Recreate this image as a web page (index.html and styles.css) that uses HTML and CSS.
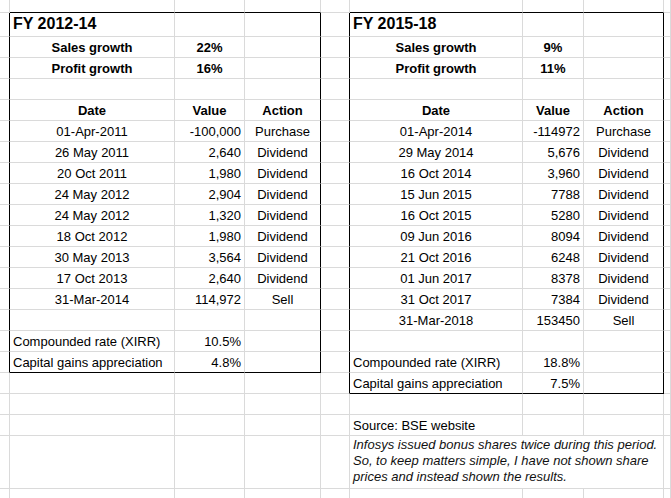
FILE: index.html
```html
<!DOCTYPE html>
<html>
<head>
<meta charset="utf-8">
<title>Infosys returns</title>
<link rel="stylesheet" href="styles.css">
</head>
<body>
<div class="sheet">
  <!-- r0 -->
  <div></div><div class="bb"></div><div class="bb"></div><div class="bb"></div><div></div><div class="bb"></div><div class="bb"></div><div class="bb"></div><div></div>
  <!-- r1 -->
  <div class="br"></div><div class="t">FY 2012-14</div><div></div><div class="br"></div><div class="br"></div><div class="t">FY 2015-18</div><div></div><div class="br"></div><div></div>
  <!-- r2 -->
  <div class="br"></div><div class="b c">Sales growth</div><div class="b c">22%</div><div class="br"></div><div class="br"></div><div class="b c">Sales growth</div><div class="b c">9%</div><div class="br"></div><div></div>
  <!-- r3 -->
  <div class="br"></div><div class="b c">Profit growth</div><div class="b c">16%</div><div class="br"></div><div class="br"></div><div class="b c">Profit growth</div><div class="b c">11%</div><div class="br"></div><div></div>
  <!-- r4 -->
  <div class="br"></div><div></div><div></div><div class="br"></div><div class="br"></div><div></div><div></div><div class="br"></div><div></div>
  <!-- r5 -->
  <div class="br"></div><div class="b c">Date</div><div class="b c">Value</div><div class="b c br">Action</div><div class="br"></div><div class="b c">Date</div><div class="b c">Value</div><div class="b c br">Action</div><div></div>
  <!-- r6 -->
  <div class="br"></div><div class="c">01-Apr-2011</div><div class="r">-100,000</div><div class="c br">Purchase</div><div class="br"></div><div class="c">01-Apr-2014</div><div class="r">-114972</div><div class="c br">Purchase</div><div></div>
  <!-- r7 -->
  <div class="br"></div><div class="c">26 May 2011</div><div class="r">2,640</div><div class="c br">Dividend</div><div class="br"></div><div class="c">29 May 2014</div><div class="r">5,676</div><div class="c br">Dividend</div><div></div>
  <!-- r8 -->
  <div class="br"></div><div class="c">20 Oct 2011</div><div class="r">1,980</div><div class="c br">Dividend</div><div class="br"></div><div class="c">16 Oct 2014</div><div class="r">3,960</div><div class="c br">Dividend</div><div></div>
  <!-- r9 -->
  <div class="br"></div><div class="c">24 May 2012</div><div class="r">2,904</div><div class="c br">Dividend</div><div class="br"></div><div class="c">15 Jun 2015</div><div class="r">7788</div><div class="c br">Dividend</div><div></div>
  <!-- r10 -->
  <div class="br"></div><div class="c">24 May 2012</div><div class="r">1,320</div><div class="c br">Dividend</div><div class="br"></div><div class="c">16 Oct 2015</div><div class="r">5280</div><div class="c br">Dividend</div><div></div>
  <!-- r11 -->
  <div class="br"></div><div class="c">18 Oct 2012</div><div class="r">1,980</div><div class="c br">Dividend</div><div class="br"></div><div class="c">09 Jun 2016</div><div class="r">8094</div><div class="c br">Dividend</div><div></div>
  <!-- r12 -->
  <div class="br"></div><div class="c">30 May 2013</div><div class="r">3,564</div><div class="c br">Dividend</div><div class="br"></div><div class="c">21 Oct 2016</div><div class="r">6248</div><div class="c br">Dividend</div><div></div>
  <!-- r13 -->
  <div class="br"></div><div class="c">17 Oct 2013</div><div class="r">2,640</div><div class="c br">Dividend</div><div class="br"></div><div class="c">01 Jun 2017</div><div class="r">8378</div><div class="c br">Dividend</div><div></div>
  <!-- r14 -->
  <div class="br"></div><div class="c">31-Mar-2014</div><div class="r">114,972</div><div class="c br">Sell</div><div class="br"></div><div class="c">31 Oct 2017</div><div class="r">7384</div><div class="c br">Dividend</div><div></div>
  <!-- r15 -->
  <div class="br"></div><div></div><div></div><div class="br"></div><div class="br"></div><div class="c">31-Mar-2018</div><div class="r">153450</div><div class="c br">Sell</div><div></div>
  <!-- r16 -->
  <div class="br"></div><div>Compounded rate (XIRR)</div><div class="r">10.5%</div><div class="br"></div><div class="br"></div><div></div><div></div><div class="br"></div><div></div>
  <!-- r17 -->
  <div class="br"></div><div class="bb">Capital gains appreciation</div><div class="r bb">4.8%</div><div class="br bb"></div><div class="br"></div><div>Compounded rate (XIRR)</div><div class="r">18.8%</div><div class="br"></div><div></div>
  <!-- r18 -->
  <div></div><div></div><div></div><div></div><div class="br"></div><div class="bb">Capital gains appreciation</div><div class="r bb">7.5%</div><div class="br bb"></div><div></div>
  <!-- r19 -->
  <div></div><div></div><div></div><div></div><div></div><div></div><div></div><div></div><div></div>
  <!-- r20 -->
  <div></div><div></div><div></div><div></div><div></div><div>Source: BSE website</div><div></div><div></div><div></div>
  <!-- r21 -->
  <div></div><div></div><div></div><div></div><div></div><div class="note">Infosys issued bonus shares twice during this period. So, to keep matters simple, I have not shown share prices and instead shown the results.</div><div></div>
  <!-- r22 -->
  <div></div><div></div><div></div><div></div><div></div><div></div><div></div><div></div><div></div>
</div>
</body>
</html>
```

FILE: styles.css
```css
html, body {
  margin: 0;
  padding: 0;
  background: #ffffff;
}

body {
  font-family: "Liberation Sans", Arial, sans-serif;
  font-size: 13px;
  color: #000000;
}

.sheet {
  display: grid;
  grid-template-columns: 10px 165px 70px 76px 29px 173px 61px 80px 1fr;
  grid-template-rows: 13px 24px repeat(19, 21px) 53px 20px;
  width: 671px;
  height: 498px;
  overflow: hidden;
}

.sheet > div {
  box-sizing: border-box;
  border-right: 1px solid #dadada;
  border-bottom: 1px solid #dadada;
  display: flex;
  align-items: flex-end;
  padding: 0 3px 2px 3px;
  line-height: 15px;
  white-space: nowrap;
  min-width: 0;
}

.sheet > .bb {
  border-bottom-color: #000000;
}

.sheet > .br {
  border-right-color: #000000;
}

.sheet > .t {
  font-size: 16px;
  font-weight: bold;
  line-height: 18px;
  padding-bottom: 3px;
}

.b {
  font-weight: bold;
}

.sheet > .c {
  justify-content: center;
}

.sheet > .r {
  justify-content: flex-end;
}

.sheet > .note {
  grid-column: span 3;
  font-style: italic;
  white-space: normal;
  line-height: 16px;
  padding-bottom: 3px;
  color: #111111;
}
```
